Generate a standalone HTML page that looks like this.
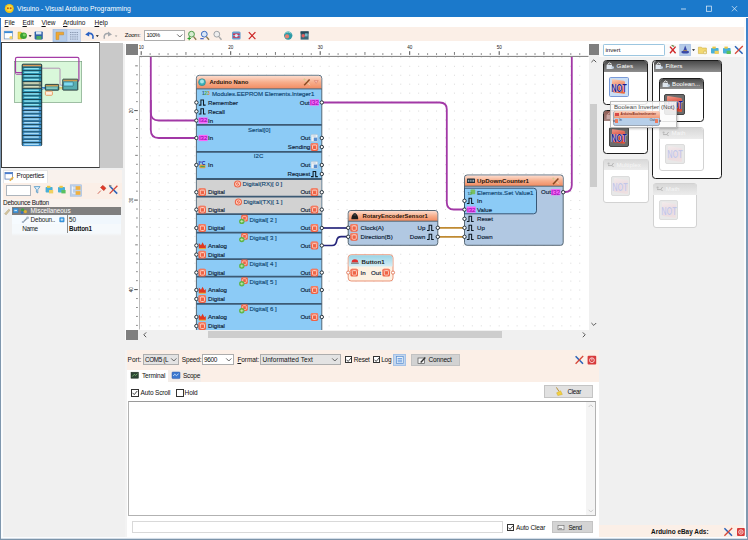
<!DOCTYPE html>
<html><head><meta charset="utf-8"><title>Visuino - Visual Arduino Programming</title>
<style>
html,body{margin:0;padding:0;}
body{width:748px;height:540px;overflow:hidden;background:#f0f0f0;position:relative;font-family:"Liberation Sans",sans-serif;}
div,span.t,svg{position:absolute;box-sizing:border-box;}
span.t{white-space:nowrap;}
u{text-decoration:underline;}
</style></head><body>
<div style="left:0px;top:0px;width:748px;height:17px;background:#1b79cb;"></div>
<svg style="left:4px;top:3px" width="11" height="11" viewBox="0 0 11 11"><circle cx="5.3" cy="5.5" r="4.5" fill="#f2c313"/><circle cx="5.3" cy="5.2" r="3" fill="#f7dc4a"/><circle cx="3.9" cy="5.3" r="1" fill="#c05a10"/><circle cx="6.7" cy="5.3" r="1" fill="#c05a10"/></svg>
<span class="t" style="top:4.53px;font-size:6.78px;line-height:8.14px;color:#fff;left:17px;">Visuino - Visual Arduino Programming</span>
<svg style="left:670px;top:0" width="78" height="18" viewBox="0 0 78 18"><path d="M11 9h5" stroke="#fff" stroke-width="0.7" fill="none"/><rect x="36.4" y="6.1" width="5.2" height="5.2" stroke="#eaf3fb" stroke-width="0.7" fill="none"/><path d="M61.9 6.1l5.2 5.2M67.1 6.1l-5.2 5.2" stroke="#eaf3fb" stroke-width="0.7" fill="none"/></svg>
<div style="left:0px;top:17px;width:748px;height:10.5px;background:#fff;"></div>
<span class="t" style="top:18.90px;font-size:6.5px;line-height:7.8px;color:#111;left:4.5px;"><u>F</u>ile</span>
<span class="t" style="top:18.90px;font-size:6.5px;line-height:7.8px;color:#111;left:22.5px;"><u>E</u>dit</span>
<span class="t" style="top:18.90px;font-size:6.5px;line-height:7.8px;color:#111;left:41.5px;"><u>V</u>iew</span>
<span class="t" style="top:18.90px;font-size:6.5px;line-height:7.8px;color:#111;left:63px;"><u>A</u>rduino</span>
<span class="t" style="top:18.90px;font-size:6.5px;line-height:7.8px;color:#111;left:94.5px;"><u>H</u>elp</span>
<div style="left:0px;top:27.3px;width:748px;height:13.7px;background:#fbefe7;"></div>
<div style="left:0px;top:41px;width:748px;height:2.5px;background:#fff;"></div>
<svg style="left:0;top:27px" width="330" height="16" viewBox="0 0 330 16">
<rect x="4.3" y="4.3" width="8.2" height="7.6" fill="#fff" stroke="#7aa0c8" stroke-width="0.8"/><rect x="4.3" y="4.3" width="8.2" height="1.8" fill="#3a8ad8"/><circle cx="11" cy="10.5" r="1.6" fill="#f2d060"/>
<path d="M18 5h3l1 1v6h-4z" fill="#f0d040" stroke="#c8a020" stroke-width="0.5"/><ellipse cx="23.5" cy="8.8" rx="3.4" ry="3.2" fill="#3aa030"/><ellipse cx="24.3" cy="8" rx="1.6" ry="1.4" fill="#7ad060"/>
<path d="M28.6 8.2h3l-1.5 1.8z" fill="#111"/>
<rect x="34.6" y="4.4" width="8.2" height="8" rx="0.8" fill="#3060a8"/><rect x="36" y="4.4" width="5.4" height="3" fill="#d8e4f4"/><rect x="36.4" y="9" width="5" height="3.4" fill="#4aa860"/>
<rect x="53" y="2.6" width="13.4" height="12.2" fill="#b4cbe8" stroke="#8fb0dc" stroke-width="0.6"/><path d="M56 12.6v-7.4h7.6v2.6h-4.8v4.8z" fill="#f0a830" stroke="#c88420" stroke-width="0.5"/>
<rect x="67" y="2.6" width="13.4" height="12.2" fill="#cddbf0" stroke="#a8c0e4" stroke-width="0.6"/><path d="M70 5.5h8M70 7.7h8M70 9.9h8M70 12.1h8" stroke="#8090a8" stroke-width="0.9" stroke-dasharray="1.4 0.8"/>
<path d="M92.8 11.8c1.2-3.6-1.2-6-4.4-5.2" stroke="#2a62c4" stroke-width="1.7" fill="none"/><path d="M85.2 7.4l4-3v5.2z" fill="#2a62c4"/>
<path d="M95.8 8.2h3l-1.5 1.8z" fill="#111"/>
<path d="M104.4 11.8c-1.2-3.6 1.2-6 4.4-5.2" stroke="#a4a8ac" stroke-width="1.5" fill="none"/><path d="M112 7.4l-4-3v5.2z" fill="#a4a8ac"/>
<path d="M114.8 8.4h2.6l-1.3 1.6z" fill="#999"/>
<g><circle cx="191.5" cy="7.2" r="2.9" fill="#d6ecd0" stroke="#4c9a48" stroke-width="1"/><path d="M193.6 9.6l2.6 3.2" stroke="#8a7a50" stroke-width="1.4"/><path d="M187.5 11.5h3.4M189.2 9.8v3.4" stroke="#2aa02a" stroke-width="1.1"/></g>
<g><circle cx="204.3" cy="7.2" r="2.9" fill="#d8e6f8" stroke="#3c6cc0" stroke-width="1"/><path d="M206.4 9.6l2.6 3.2" stroke="#8a7a50" stroke-width="1.4"/><path d="M200.3 11.7h3.4" stroke="#2a50c0" stroke-width="1.1"/></g>
<g><circle cx="216.8" cy="7.2" r="2.9" fill="#eee" stroke="#a0a4a8" stroke-width="1"/><path d="M218.9 9.6l2.6 3.2" stroke="#a8a8a8" stroke-width="1.4"/></g>
<g><rect x="232" y="4.6" width="8.6" height="7.8" rx="1.5" fill="#6aa0d0"/><path d="M233 7.2h6.6M233 10h6.6" stroke="#d03050" stroke-width="1.5"/><circle cx="236.3" cy="8.6" r="1.6" fill="#e8e8f0"/></g>
<path d="M248.8 5.2l6.6 7M255.4 5.2l-6.6 7" stroke="#cc2424" stroke-width="1.2" fill="none"/>
<circle cx="288.2" cy="8.6" r="4.2" fill="#2e9aa6"/><circle cx="287" cy="9.4" r="2.1" fill="#e88070"/><path d="M285 6.2c2-1.6 5-1.4 6.4 0.6" stroke="#8fd8d8" stroke-width="1" fill="none"/>
<rect x="300.6" y="4.4" width="8" height="8.2" fill="#3a6878"/><rect x="300.6" y="4.4" width="8" height="2.2" fill="#284858"/><circle cx="303.2" cy="8.8" r="1.7" fill="#e86060"/><rect x="305" y="6.4" width="2.6" height="3" fill="#7ab8c8"/>
</svg>
<span class="t" style="top:31.67px;font-size:6.05px;line-height:7.26px;color:#111;left:124.8px;letter-spacing:-0.309px;">Zoom:</span>
<div style="left:144px;top:29.8px;width:41.2px;height:11.6px;background:#fff;border:1px solid #adadad;"></div>
<span class="t" style="top:32.09px;font-size:5.85px;line-height:7.02px;color:#111;left:146.4px;letter-spacing:-0.341px;">100%</span>
<svg style="left:176px;top:33px" width="8" height="6" viewBox="0 0 8 6"><path d="M1.2 1.4l2.6 2.6 2.6-2.6" stroke="#444" stroke-width="0.8" fill="none"/></svg>
<div style="left:0px;top:17.5px;width:1px;height:522.5px;background:linear-gradient(#2f78c8,#6a92bc 12%,#7f97ae 30%);"></div>
<div style="left:1px;top:43px;width:2px;height:495px;background:#fafcfe;"></div>
<div style="left:746.2px;top:17.5px;width:1.8px;height:522.5px;background:linear-gradient(#3a80cc,#6a96c4 20%,#8199b0 50%);"></div>
<div style="left:744.2px;top:17.5px;width:2px;height:521px;background:#fafcfe;"></div>
<div style="left:0px;top:539px;width:748px;height:1px;background:#7c94aa;"></div>
<div style="left:1px;top:538px;width:746px;height:1px;background:#d3dce6;"></div>
<div style="left:1px;top:536.6px;width:745.5px;height:1.4px;background:#fbfdff;"></div>
<div style="left:100.4px;top:42.6px;width:22.6px;height:125px;background:#c9c9c9;"></div>
<div style="left:1.4px;top:42px;width:98.4px;height:125.8px;background:#fff;border:1px solid #3a3a3a;border-right-color:#888;"></div>
<svg style="left:0;top:42px" width="125" height="126" viewBox="0 42 125 126"><rect x="14.4" y="61.4" width="67.3" height="41.2" fill="#d9f8da" stroke="#6e9676" stroke-width="0.6"/><path d="M22 72.7h-5q-1.5 0-1.5-1.5v-12.4q0-1.5 1.5-1.5h60.4q1.5 0 1.5 1.5v21q0 1.5-1.2 1.5" fill="none" stroke="#a43ca6" stroke-width="1.2"/><path d="M22 74.4h-5.4q-1.1 0-1.1-1.1v-9" fill="none" stroke="#a43ca6" stroke-width="0.8"/><path d="M41.8 68.2h17.2q1 0 1 1v15q0 1 1 1h1.9" fill="none" stroke="#a878aa" stroke-width="0.8"/><path d="M41.8 87.6h3.6M41.8 89.2q1.6 0 1.8-0.5t1.8-0.5" fill="none" stroke="#2c78d0" stroke-width="1"/><path d="M58.7 87.6h4.2M58.7 88.8h4.2" fill="none" stroke="#e0c060" stroke-width="0.9"/><rect x="22.2" y="64.2" width="19.5" height="81.4" rx="0.8" fill="#2f93b4" stroke="#182a30" stroke-width="1"/><rect x="22.8" y="64.8" width="18.3" height="1.6" fill="#d89a58"/><rect x="22.8" y="66.80" width="18.3" height="1" fill="#12262e"/><rect x="22.8" y="67.50" width="18.3" height="2.9" fill="#2a90ae"/><rect x="24.2" y="68.00" width="14.6" height="1.4" fill="#8fe2f0"/><rect x="22.8" y="70.40" width="18.3" height="1" fill="#12262e"/><rect x="22.8" y="71.10" width="18.3" height="2.9" fill="#2a90ae"/><rect x="24.2" y="71.60" width="14.6" height="1.4" fill="#8fe2f0"/><rect x="22.8" y="74.00" width="18.3" height="1" fill="#12262e"/><rect x="22.8" y="74.70" width="18.3" height="2.9" fill="#2a90ae"/><rect x="24.2" y="75.20" width="14.6" height="1.4" fill="#8fe2f0"/><rect x="22.8" y="77.60" width="18.3" height="1" fill="#12262e"/><rect x="22.8" y="78.30" width="18.3" height="2.9" fill="#2a90ae"/><rect x="24.2" y="78.80" width="14.6" height="1.4" fill="#8fe2f0"/><rect x="22.8" y="81.20" width="18.3" height="1" fill="#12262e"/><rect x="22.8" y="81.90" width="18.3" height="2.9" fill="#8a947c"/><rect x="24.2" y="82.40" width="14.6" height="1.4" fill="#d4dcc0"/><rect x="22.8" y="84.80" width="18.3" height="1" fill="#12262e"/><rect x="22.8" y="85.50" width="18.3" height="2.9" fill="#8a947c"/><rect x="24.2" y="86.00" width="14.6" height="1.4" fill="#d4dcc0"/><rect x="22.8" y="88.40" width="18.3" height="1" fill="#12262e"/><rect x="22.8" y="89.10" width="18.3" height="2.9" fill="#2a90ae"/><rect x="24.2" y="89.60" width="14.6" height="1.4" fill="#8fe2f0"/><rect x="22.8" y="92.00" width="18.3" height="1" fill="#12262e"/><rect x="22.8" y="92.70" width="18.3" height="2.9" fill="#2a90ae"/><rect x="24.2" y="93.20" width="14.6" height="1.4" fill="#8fe2f0"/><rect x="22.8" y="95.60" width="18.3" height="1" fill="#12262e"/><rect x="22.8" y="96.30" width="18.3" height="2.9" fill="#2a90ae"/><rect x="24.2" y="96.80" width="14.6" height="1.4" fill="#8fe2f0"/><rect x="22.8" y="99.20" width="18.3" height="1" fill="#12262e"/><rect x="22.8" y="99.90" width="18.3" height="2.9" fill="#2a90ae"/><rect x="24.2" y="100.40" width="14.6" height="1.4" fill="#8fe2f0"/><rect x="22.8" y="102.80" width="18.3" height="1" fill="#12262e"/><rect x="22.8" y="103.50" width="18.3" height="2.9" fill="#2a90ae"/><rect x="24.2" y="104.00" width="14.6" height="1.4" fill="#8fe2f0"/><rect x="22.8" y="106.40" width="18.3" height="1" fill="#12262e"/><rect x="22.8" y="107.10" width="18.3" height="2.9" fill="#3f8ec8"/><rect x="24.2" y="107.60" width="14.6" height="1.4" fill="#a8dcf6"/><rect x="22.8" y="110.00" width="18.3" height="1" fill="#12262e"/><rect x="22.8" y="110.70" width="18.3" height="2.9" fill="#3f8ec8"/><rect x="24.2" y="111.20" width="14.6" height="1.4" fill="#a8dcf6"/><rect x="22.8" y="113.60" width="18.3" height="1" fill="#12262e"/><rect x="22.8" y="114.30" width="18.3" height="2.9" fill="#3f8ec8"/><rect x="24.2" y="114.80" width="14.6" height="1.4" fill="#a8dcf6"/><rect x="22.8" y="117.20" width="18.3" height="1" fill="#12262e"/><rect x="22.8" y="117.90" width="18.3" height="2.9" fill="#3f8ec8"/><rect x="24.2" y="118.40" width="14.6" height="1.4" fill="#a8dcf6"/><rect x="22.8" y="120.80" width="18.3" height="1" fill="#12262e"/><rect x="22.8" y="121.50" width="18.3" height="2.9" fill="#3f8ec8"/><rect x="24.2" y="122.00" width="14.6" height="1.4" fill="#a8dcf6"/><rect x="22.8" y="124.40" width="18.3" height="1" fill="#12262e"/><rect x="22.8" y="125.10" width="18.3" height="2.9" fill="#3f8ec8"/><rect x="24.2" y="125.60" width="14.6" height="1.4" fill="#a8dcf6"/><rect x="22.8" y="128.00" width="18.3" height="1" fill="#12262e"/><rect x="22.8" y="128.70" width="18.3" height="2.9" fill="#3f8ec8"/><rect x="24.2" y="129.20" width="14.6" height="1.4" fill="#a8dcf6"/><rect x="22.8" y="131.60" width="18.3" height="1" fill="#12262e"/><rect x="22.8" y="132.30" width="18.3" height="2.9" fill="#3f8ec8"/><rect x="24.2" y="132.80" width="14.6" height="1.4" fill="#a8dcf6"/><rect x="22.8" y="135.20" width="18.3" height="1" fill="#12262e"/><rect x="22.8" y="135.90" width="18.3" height="2.9" fill="#3f8ec8"/><rect x="24.2" y="136.40" width="14.6" height="1.4" fill="#a8dcf6"/><rect x="22.8" y="138.80" width="18.3" height="1" fill="#12262e"/><rect x="22.8" y="139.50" width="18.3" height="2.9" fill="#3f8ec8"/><rect x="24.2" y="140.00" width="14.6" height="1.4" fill="#a8dcf6"/><rect x="22.8" y="142.40" width="18.3" height="1" fill="#12262e"/><rect x="22.8" y="143.10" width="18.3" height="2.9" fill="#3f8ec8"/><rect x="24.2" y="143.60" width="14.6" height="1.4" fill="#a8dcf6"/><rect x="45.3" y="84.4" width="13.4" height="5.8" rx="0.5" fill="#55a8a8" stroke="#1a2a2e" stroke-width="0.9"/><rect x="45.8" y="84.9" width="12.4" height="1.5" fill="#c89a50"/><rect x="46.6" y="87.4" width="10.6" height="1.6" fill="#84c8c0"/><rect x="45.4" y="91.2" width="7" height="4.1" rx="0.9" fill="#fdeedd" stroke="#e88a48" stroke-width="0.8"/><rect x="62.8" y="79.2" width="15" height="10.9" rx="0.5" fill="#58aeb0" stroke="#1a2a2e" stroke-width="0.9"/><rect x="63.3" y="79.7" width="14" height="1.6" fill="#c89a50"/><rect x="63.6" y="82" width="9.6" height="4" rx="0.5" fill="#7fdcf0" stroke="#1c4c60" stroke-width="0.5"/></svg>
<div style="left:2.6px;top:169.6px;width:119.4px;height:13px;background:#f9f2ed;"></div>
<div style="left:2.6px;top:169.8px;width:45.6px;height:13px;background:#fff;border:1px solid #e6e6e6;border-bottom:none;"></div>
<svg style="left:4px;top:171px" width="11" height="11" viewBox="0 0 11 11"><rect x="1" y="1.5" width="7.6" height="6.6" fill="#fff" stroke="#5a7eb8" stroke-width="0.8"/><rect x="1" y="1.5" width="7.6" height="1.6" fill="#4a7ed0"/><path d="M5.2 9.2l3.4-3.6 1.2 1.2-3.4 3.4z" fill="#e8b040"/></svg>
<span class="t" style="top:172.46px;font-size:6.4px;line-height:7.68px;color:#111;left:16.6px;letter-spacing:-0.167px;">Properties</span>
<div style="left:2.6px;top:182.6px;width:119.4px;height:16.6px;background:#fbefe7;"></div>
<div style="left:2.6px;top:199.2px;width:119.4px;height:8px;background:#f8f2ee;"></div>
<div style="left:6px;top:185.2px;width:25.4px;height:11px;background:#fff;border:1px solid #adb5bd;"></div>
<svg style="left:32px;top:183px" width="90" height="15" viewBox="32 183 90 15">
<path d="M34.2 186.6h5.8l-2.2 3v3.4l-1.4-0.8v-2.6z" fill="#e0f0fa" stroke="#3a8ac0" stroke-width="0.7"/>
<rect x="45.6" y="187" width="7" height="5.6" rx="0.8" fill="#48b0d8"/><rect x="47" y="185.8" width="3.4" height="2" fill="#f0c840"/><rect x="49" y="190" width="4.2" height="3.4" fill="#f0d060"/>
<rect x="58" y="187" width="7" height="5.6" rx="0.8" fill="#48b0d8"/><rect x="59.4" y="185.8" width="3.4" height="2" fill="#f0c840"/><rect x="61.4" y="190" width="4.2" height="3.4" fill="#5ac060"/>
<rect x="70.2" y="184.8" width="11.4" height="11.4" fill="#bcd0ea" stroke="#9ab8e0" stroke-width="0.5"/><rect x="75.6" y="186.2" width="4.8" height="3.6" fill="#f0b040"/><rect x="75.6" y="191.2" width="4.8" height="3.6" fill="#f0b040"/><path d="M72.4 186.4v6.8h3M72.4 188h3" stroke="#fff" stroke-width="0.8" fill="none"/>
<path d="M100.6 187.4l2.4-2 2.8 2.8-2 2.4zM100.8 190.6l-3 3.2" fill="#e03828" stroke="#c03020" stroke-width="0.7"/>
<path d="M109.6 186l7.6 7.6" stroke="#2a62b8" stroke-width="1.5"/><path d="M117.4 185.8l-7.8 7.8" stroke="#d84838" stroke-width="1.3"/><path d="M109 185.4l2.4 0.6" stroke="#888" stroke-width="1.4"/>
</svg>
<span class="t" style="top:198.96px;font-size:6.4px;line-height:7.68px;color:#111;left:3px;letter-spacing:-0.231px;">Debounce Button</span>
<div style="left:12.4px;top:207px;width:108.8px;height:8.2px;background:#7f7f7f;"></div>
<svg style="left:3px;top:206px" width="30" height="11" viewBox="3 206 30 11">
<path d="M4.6 213.8l4.2-4.6 1.2 1-3.8 4.6z" fill="#d8c8a0" stroke="#9a8a60" stroke-width="0.4"/>
<rect x="13.4" y="208.2" width="4.6" height="4.6" fill="#4aa0e0" stroke="#2a78c0" stroke-width="0.5"/><path d="M14.4 210.5h2.6" stroke="#fff" stroke-width="0.7"/>
<circle cx="22.6" cy="209.8" r="1.6" fill="#40a040"/><circle cx="25.4" cy="211.6" r="1.6" fill="#e0b030"/><circle cx="22" cy="212.6" r="1.3" fill="#3070c0"/>
</svg>
<span class="t" style="top:207.36px;font-size:6.4px;line-height:7.68px;color:#fff;left:30.6px;letter-spacing:-0.043px;">Miscellaneous</span>
<div style="left:12.4px;top:215px;width:108.8px;height:18.4px;background:#f5f9fc;"></div>
<div style="left:12.4px;top:233.4px;width:108.8px;height:3px;background:linear-gradient(#f5f9fc,#f0f0f0);"></div>
<div style="left:12.4px;top:215px;width:54.8px;height:9px;background:#f6fbff;"></div>
<div style="left:67.6px;top:215px;width:53.6px;height:9px;background:#f0f7fd;"></div>
<div style="left:67.2px;top:215px;width:0.7px;height:18.4px;background:#8a8a8a;"></div>
<svg style="left:20px;top:215px" width="46" height="10" viewBox="20 215 46 10">
<path d="M22.6 222.6l4.4-4.4" stroke="#8898a8" stroke-width="1.3"/><circle cx="27.6" cy="217.8" r="1.4" fill="#a8b8c8"/><circle cx="22.8" cy="222" r="1.1" fill="#a8b8c8"/>
<rect x="59.6" y="217.4" width="4.6" height="4.6" rx="0.6" fill="#3c9ae0" stroke="#2a78c0" stroke-width="0.4"/><path d="M60.6 219.7h2.6M61.9 218.4v2.6" stroke="#fff" stroke-width="0.7"/>
</svg>
<span class="t" style="top:215.96px;font-size:6.4px;line-height:7.68px;color:#222;left:30.6px;letter-spacing:-0.184px;">Deboun..</span>
<span class="t" style="top:216.02px;font-size:6.3px;line-height:7.56px;color:#222;left:69px;">50</span>
<span class="t" style="top:225.16px;font-size:6.4px;line-height:7.68px;color:#222;left:22.2px;letter-spacing:-0.368px;">Name</span>
<span class="t" style="top:225.22px;font-size:6.3px;line-height:7.56px;color:#111;font-weight:bold;left:69px;letter-spacing:-0.114px;">Button1</span>
<div style="left:124.6px;top:43.5px;width:475px;height:296.8px;background:#fff;"></div>
<div style="left:125.7px;top:44px;width:12.2px;height:10.5px;background:#7f7f7f;"></div>
<div style="left:588.6px;top:44px;width:10px;height:10.5px;background:#7f7f7f;"></div>
<div style="left:125.7px;top:329.6px;width:12.2px;height:10.5px;background:#7f7f7f;"></div>
<svg style="left:124px;top:43px" width="476" height="298" viewBox="124 43 476 298"><path d="M139.6 56.4H588.5" stroke="#7a7a7a" stroke-width="1"/><path d="M140 56V329.5" stroke="#7a7a7a" stroke-width="1"/><path d="M141.20 51.2V54.9" stroke="#222" stroke-width="0.8"/><text x="138.80" y="49.2" font-size="4.6" fill="#222" font-family="Liberation Sans, sans-serif">10</text><path d="M150.15 53.2V54.9" stroke="#666" stroke-width="0.8"/><path d="M159.10 53.2V54.9" stroke="#666" stroke-width="0.8"/><path d="M168.05 53.2V54.9" stroke="#666" stroke-width="0.8"/><path d="M177.00 53.2V54.9" stroke="#666" stroke-width="0.8"/><path d="M185.95 52V54.9" stroke="#444" stroke-width="0.7"/><path d="M194.90 53.2V54.9" stroke="#666" stroke-width="0.8"/><path d="M203.85 53.2V54.9" stroke="#666" stroke-width="0.8"/><path d="M212.80 53.2V54.9" stroke="#666" stroke-width="0.8"/><path d="M221.75 53.2V54.9" stroke="#666" stroke-width="0.8"/><path d="M230.70 51.2V54.9" stroke="#222" stroke-width="0.8"/><text x="228.30" y="49.2" font-size="4.6" fill="#222" font-family="Liberation Sans, sans-serif">20</text><path d="M239.65 53.2V54.9" stroke="#666" stroke-width="0.8"/><path d="M248.60 53.2V54.9" stroke="#666" stroke-width="0.8"/><path d="M257.55 53.2V54.9" stroke="#666" stroke-width="0.8"/><path d="M266.50 53.2V54.9" stroke="#666" stroke-width="0.8"/><path d="M275.45 52V54.9" stroke="#444" stroke-width="0.7"/><path d="M284.40 53.2V54.9" stroke="#666" stroke-width="0.8"/><path d="M293.35 53.2V54.9" stroke="#666" stroke-width="0.8"/><path d="M302.30 53.2V54.9" stroke="#666" stroke-width="0.8"/><path d="M311.25 53.2V54.9" stroke="#666" stroke-width="0.8"/><path d="M320.20 51.2V54.9" stroke="#222" stroke-width="0.8"/><text x="317.80" y="49.2" font-size="4.6" fill="#222" font-family="Liberation Sans, sans-serif">30</text><path d="M329.15 53.2V54.9" stroke="#666" stroke-width="0.8"/><path d="M338.10 53.2V54.9" stroke="#666" stroke-width="0.8"/><path d="M347.05 53.2V54.9" stroke="#666" stroke-width="0.8"/><path d="M356.00 53.2V54.9" stroke="#666" stroke-width="0.8"/><path d="M364.95 52V54.9" stroke="#444" stroke-width="0.7"/><path d="M373.90 53.2V54.9" stroke="#666" stroke-width="0.8"/><path d="M382.85 53.2V54.9" stroke="#666" stroke-width="0.8"/><path d="M391.80 53.2V54.9" stroke="#666" stroke-width="0.8"/><path d="M400.75 53.2V54.9" stroke="#666" stroke-width="0.8"/><path d="M409.70 51.2V54.9" stroke="#222" stroke-width="0.8"/><text x="407.30" y="49.2" font-size="4.6" fill="#222" font-family="Liberation Sans, sans-serif">40</text><path d="M418.65 53.2V54.9" stroke="#666" stroke-width="0.8"/><path d="M427.60 53.2V54.9" stroke="#666" stroke-width="0.8"/><path d="M436.55 53.2V54.9" stroke="#666" stroke-width="0.8"/><path d="M445.50 53.2V54.9" stroke="#666" stroke-width="0.8"/><path d="M454.45 52V54.9" stroke="#444" stroke-width="0.7"/><path d="M463.40 53.2V54.9" stroke="#666" stroke-width="0.8"/><path d="M472.35 53.2V54.9" stroke="#666" stroke-width="0.8"/><path d="M481.30 53.2V54.9" stroke="#666" stroke-width="0.8"/><path d="M490.25 53.2V54.9" stroke="#666" stroke-width="0.8"/><path d="M499.20 51.2V54.9" stroke="#222" stroke-width="0.8"/><text x="496.80" y="49.2" font-size="4.6" fill="#222" font-family="Liberation Sans, sans-serif">50</text><path d="M508.15 53.2V54.9" stroke="#666" stroke-width="0.8"/><path d="M517.10 53.2V54.9" stroke="#666" stroke-width="0.8"/><path d="M526.05 53.2V54.9" stroke="#666" stroke-width="0.8"/><path d="M535.00 53.2V54.9" stroke="#666" stroke-width="0.8"/><path d="M543.95 52V54.9" stroke="#444" stroke-width="0.7"/><path d="M552.90 53.2V54.9" stroke="#666" stroke-width="0.8"/><path d="M561.85 53.2V54.9" stroke="#666" stroke-width="0.8"/><path d="M570.80 53.2V54.9" stroke="#666" stroke-width="0.8"/><path d="M579.75 53.2V54.9" stroke="#666" stroke-width="0.8"/><path d="M135.2 65.85H137.8" stroke="#444" stroke-width="0.7"/><path d="M136.1 74.80H137.8" stroke="#666" stroke-width="0.8"/><path d="M136.1 83.75H137.8" stroke="#666" stroke-width="0.8"/><path d="M136.1 92.70H137.8" stroke="#666" stroke-width="0.8"/><path d="M136.1 101.65H137.8" stroke="#666" stroke-width="0.8"/><path d="M134.2 110.60H137.8" stroke="#222" stroke-width="0.8"/><text transform="translate(132.6 113.20) rotate(-90)" font-size="4.6" fill="#222" font-family="Liberation Sans, sans-serif">20</text><path d="M136.1 119.55H137.8" stroke="#666" stroke-width="0.8"/><path d="M136.1 128.50H137.8" stroke="#666" stroke-width="0.8"/><path d="M136.1 137.45H137.8" stroke="#666" stroke-width="0.8"/><path d="M136.1 146.40H137.8" stroke="#666" stroke-width="0.8"/><path d="M135.2 155.35H137.8" stroke="#444" stroke-width="0.7"/><path d="M136.1 164.30H137.8" stroke="#666" stroke-width="0.8"/><path d="M136.1 173.25H137.8" stroke="#666" stroke-width="0.8"/><path d="M136.1 182.20H137.8" stroke="#666" stroke-width="0.8"/><path d="M136.1 191.15H137.8" stroke="#666" stroke-width="0.8"/><path d="M134.2 200.10H137.8" stroke="#222" stroke-width="0.8"/><text transform="translate(132.6 202.70) rotate(-90)" font-size="4.6" fill="#222" font-family="Liberation Sans, sans-serif">30</text><path d="M136.1 209.05H137.8" stroke="#666" stroke-width="0.8"/><path d="M136.1 218.00H137.8" stroke="#666" stroke-width="0.8"/><path d="M136.1 226.95H137.8" stroke="#666" stroke-width="0.8"/><path d="M136.1 235.90H137.8" stroke="#666" stroke-width="0.8"/><path d="M135.2 244.85H137.8" stroke="#444" stroke-width="0.7"/><path d="M136.1 253.80H137.8" stroke="#666" stroke-width="0.8"/><path d="M136.1 262.75H137.8" stroke="#666" stroke-width="0.8"/><path d="M136.1 271.70H137.8" stroke="#666" stroke-width="0.8"/><path d="M136.1 280.65H137.8" stroke="#666" stroke-width="0.8"/><path d="M134.2 289.60H137.8" stroke="#222" stroke-width="0.8"/><text transform="translate(132.6 292.20) rotate(-90)" font-size="4.6" fill="#222" font-family="Liberation Sans, sans-serif">40</text><path d="M136.1 298.55H137.8" stroke="#666" stroke-width="0.8"/><path d="M136.1 307.50H137.8" stroke="#666" stroke-width="0.8"/><path d="M136.1 316.45H137.8" stroke="#666" stroke-width="0.8"/><path d="M136.1 325.40H137.8" stroke="#666" stroke-width="0.8"/></svg>
<div style="left:140.2px;top:57px;width:448.3px;height:272.5px;overflow:hidden;background:#fff;"><div style="left:-140.2px;top:-57px;width:748px;height:540px;">
<svg style="left:0;top:0" width="748" height="540" viewBox="0 0 748 540"><defs><pattern id="gd" x="140.7" y="65.8" width="8.95" height="8.95" patternUnits="userSpaceOnUse"><rect x="0" y="0" width="1" height="1" fill="#d9d9d9"/></pattern><linearGradient id="hd" x1="0" y1="0" x2="0" y2="1"><stop offset="0" stop-color="#fcddcf"/><stop offset="0.5" stop-color="#f7ae8c"/><stop offset="1" stop-color="#f18c62"/></linearGradient><linearGradient id="hb" x1="0" y1="0" x2="0" y2="1"><stop offset="0" stop-color="#9ad4e6"/><stop offset="1" stop-color="#d6eef6"/></linearGradient></defs><rect x="140.2" y="57" width="448.3" height="272.5" fill="url(#gd)"/><path d="M150.8 50V112.5q0 8 8 8H196" fill="none" stroke="#a238a6" stroke-width="1.8"/><path d="M150.8 100V130q0 8 8 8H196" fill="none" stroke="#a238a6" stroke-width="1.8"/><path d="M322 102.5H439.8q7 0 7 7V202.5q0 7 7 7H464" fill="none" stroke="#a238a6" stroke-width="1.8"/><path d="M563.4 192H565q6.8 0 6.8-7V50" fill="none" stroke="#a238a6" stroke-width="1.8"/><path d="M322 228H349" fill="none" stroke="#27277c" stroke-width="1.7"/><path d="M322 245.5H332q4 0 4.6-4.4t4.6-4.4H349" fill="none" stroke="#27277c" stroke-width="1.7"/><path d="M438 227.8H464.4M438 236.8H464.4" fill="none" stroke="#c08a32" stroke-width="1.8"/><path d="M196.4 340V78.3q0-3 3-3H318.8q3 0 3 3V340z" fill="#8ccbf6" stroke="#4a5a66" stroke-width="0.9"/><path d="M196.85 88.7V78.3q0-2.6 2.6-2.6H318.75q2.6 0 2.6 2.6V88.7z" fill="url(#hd)"/><path d="M196.4 88.9H321.8" stroke="#4a5a66" stroke-width="0.9"/><rect x="196.85" y="179" width="124.5" height="35" fill="#d2d2d2"/><path d="M196.4 124.8H321.8" stroke="#3c5a74" stroke-width="1.8"/><path d="M196.4 151.8H321.8" stroke="#3c5a74" stroke-width="1.8"/><path d="M196.4 179H321.8" stroke="#3c5a74" stroke-width="1.8"/><path d="M196.4 196.6H321.8" stroke="#3c5a74" stroke-width="1.8"/><path d="M196.4 214.2H321.8" stroke="#3c5a74" stroke-width="1.8"/><path d="M196.4 232.6H321.8" stroke="#3c5a74" stroke-width="1.8"/><path d="M196.4 259.2H321.8" stroke="#3c5a74" stroke-width="1.8"/><path d="M196.4 276.6H321.8" stroke="#3c5a74" stroke-width="1.8"/><path d="M196.4 303.8H321.8" stroke="#3c5a74" stroke-width="1.8"/><path d="M196.4 331H321.8" stroke="#3c5a74" stroke-width="1.8"/><circle cx="202" cy="82.2" r="3.5" fill="#3cb0b8" stroke="#2a7a84" stroke-width="0.5"/><circle cx="202" cy="81.6" r="2" fill="#a8e4e8"/><g transform="translate(307.2 82)"><path d="M-3.2 -3l6 6.2" stroke="#e6d8a8" stroke-width="1"/><path d="M-3 3.2l5.4-5.8" stroke="#8a4a22" stroke-width="1.5"/><path d="M-3.4 -3.2l1.6 1.6" stroke="#d8c890" stroke-width="1.6"/></g><path d="M314.2 80.6h4l-2 2.8z" fill="#f8c0b0" stroke="#d07060" stroke-width="0.5"/><g transform="translate(196.4 102.5)"><circle r="1.7" fill="#fff" stroke="#1e2a34" stroke-width="0.95"/></g><g transform="translate(202.20000000000002 102.5)"><path d="M-3.4 2.6h2.1v-5.2h2.6v5.2h2.1" fill="none" stroke="#0e1a24" stroke-width="1.05"/></g><g transform="translate(196.4 111.4)"><circle r="1.7" fill="#fff" stroke="#1e2a34" stroke-width="0.95"/></g><g transform="translate(202.20000000000002 111.4)"><path d="M-3.4 2.6h2.1v-5.2h2.6v5.2h2.1" fill="none" stroke="#0e1a24" stroke-width="1.05"/></g><g transform="translate(196.4 120.5)"><circle r="1.7" fill="#fff" stroke="#1e2a34" stroke-width="0.95"/></g><rect x="198.6" y="117.40" width="9" height="6.2" fill="#fa66fa"/><g transform="translate(321.8 102.5)"><circle r="1.7" fill="#fff" stroke="#1e2a34" stroke-width="0.95"/></g><rect x="309.6" y="99.40" width="9.4" height="6.2" fill="#fa66fa"/><g transform="translate(196.4 138)"><circle r="1.7" fill="#fff" stroke="#1e2a34" stroke-width="0.95"/></g><rect x="198.6" y="134.90" width="9" height="6.2" fill="#fa66fa"/><g transform="translate(321.8 138)"><circle r="1.7" fill="#fff" stroke="#1e2a34" stroke-width="0.95"/></g><g transform="translate(314.40000000000003 138)"><rect x="-3.3" y="-3.6" width="6.6" height="7.2" rx="0.8" fill="#edf2f6" stroke="#a8bccc" stroke-width="0.5"/><rect x="-0.6" y="-0.4" width="3.4" height="3.4" fill="#5a8ed0"/><path d="M-2 -2h3.4" stroke="#9ab0c8" stroke-width="0.6"/></g><g transform="translate(321.8 147)"><circle r="1.7" fill="#fff" stroke="#1e2a34" stroke-width="0.95"/></g><g transform="translate(314.40000000000003 147)"><rect x="-3.8" y="-3.9" width="7.6" height="7.8" rx="1.6" fill="#ef6446"/><rect x="-3.8" y="-3.9" width="7.6" height="3" rx="1.6" fill="#f58c74" opacity="0.6"/><rect x="-1.9" y="-2.1" width="4.2" height="4.6" rx="1.1" fill="none" stroke="#fcd4c6" stroke-width="0.9"/></g><g transform="translate(196.4 165)"><circle r="1.7" fill="#fff" stroke="#1e2a34" stroke-width="0.95"/></g><rect x="199.4" y="164.6" width="6" height="3.6" rx="0.6" fill="#e8a040"/><rect x="200.4" y="165.8" width="4.4" height="1.4" fill="#50a050"/><g transform="translate(321.8 165)"><circle r="1.7" fill="#fff" stroke="#1e2a34" stroke-width="0.95"/></g><g transform="translate(314.40000000000003 165)"><rect x="-3.3" y="-3.6" width="6.6" height="7.2" rx="0.8" fill="#edf2f6" stroke="#a8bccc" stroke-width="0.5"/><rect x="-0.6" y="-0.4" width="3.4" height="3.4" fill="#5a8ed0"/><path d="M-2 -2h3.4" stroke="#9ab0c8" stroke-width="0.6"/></g><g transform="translate(321.8 174)"><circle r="1.7" fill="#fff" stroke="#1e2a34" stroke-width="0.95"/></g><g transform="translate(314.40000000000003 174)"><path d="M-3.4 2.6h2.1v-5.2h2.6v5.2h2.1" fill="none" stroke="#0e1a24" stroke-width="1.05"/></g><g transform="translate(237.6 184)"><circle r="3.6" fill="#ef6446"/><circle r="2.1" fill="none" stroke="#fcdcd0" stroke-width="0.9"/><path d="M-1.5 1.5l3-3" stroke="#fcdcd0" stroke-width="0.9"/></g><g transform="translate(196.4 192.2)"><circle r="1.7" fill="#fff" stroke="#1e2a34" stroke-width="0.95"/></g><g transform="translate(202.20000000000002 192.2)"><rect x="-3.8" y="-3.9" width="7.6" height="7.8" rx="1.6" fill="#ef6446"/><rect x="-3.8" y="-3.9" width="7.6" height="3" rx="1.6" fill="#f58c74" opacity="0.6"/><rect x="-1.9" y="-2.1" width="4.2" height="4.6" rx="1.1" fill="none" stroke="#fcd4c6" stroke-width="0.9"/></g><g transform="translate(321.8 192.2)"><circle r="1.7" fill="#fff" stroke="#1e2a34" stroke-width="0.95"/></g><g transform="translate(314.40000000000003 192.2)"><rect x="-3.8" y="-3.9" width="7.6" height="7.8" rx="1.6" fill="#ef6446"/><rect x="-3.8" y="-3.9" width="7.6" height="3" rx="1.6" fill="#f58c74" opacity="0.6"/><rect x="-1.9" y="-2.1" width="4.2" height="4.6" rx="1.1" fill="none" stroke="#fcd4c6" stroke-width="0.9"/></g><g transform="translate(238.4 202)"><circle r="3.6" fill="#ef6446"/><circle r="2.1" fill="none" stroke="#fcdcd0" stroke-width="0.9"/><path d="M-1.5 1.5l3-3" stroke="#fcdcd0" stroke-width="0.9"/></g><g transform="translate(196.4 209.6)"><circle r="1.7" fill="#fff" stroke="#1e2a34" stroke-width="0.95"/></g><g transform="translate(202.20000000000002 209.6)"><rect x="-3.8" y="-3.9" width="7.6" height="7.8" rx="1.6" fill="#ef6446"/><rect x="-3.8" y="-3.9" width="7.6" height="3" rx="1.6" fill="#f58c74" opacity="0.6"/><rect x="-1.9" y="-2.1" width="4.2" height="4.6" rx="1.1" fill="none" stroke="#fcd4c6" stroke-width="0.9"/></g><g transform="translate(321.8 209.6)"><circle r="1.7" fill="#fff" stroke="#1e2a34" stroke-width="0.95"/></g><g transform="translate(314.40000000000003 209.6)"><rect x="-3.8" y="-3.9" width="7.6" height="7.8" rx="1.6" fill="#ef6446"/><rect x="-3.8" y="-3.9" width="7.6" height="3" rx="1.6" fill="#f58c74" opacity="0.6"/><rect x="-1.9" y="-2.1" width="4.2" height="4.6" rx="1.1" fill="none" stroke="#fcd4c6" stroke-width="0.9"/></g><g transform="translate(243.6 219.4)"><rect x="-2.4" y="-4.6" width="6.6" height="6.8" rx="1.4" fill="#ef6446"/><rect x="-0.9" y="-3.1" width="3.6" height="3.8" rx="0.9" fill="none" stroke="#fcd4c6" stroke-width="0.8"/><circle cx="-1.8" cy="2" r="2.7" fill="#5cb444"/><path d="M-3.4 2h3.2M-1.8 0.6v2.8" stroke="#dcf2cc" stroke-width="0.7"/></g><g transform="translate(196.4 228)"><circle r="1.7" fill="#fff" stroke="#1e2a34" stroke-width="0.95"/></g><g transform="translate(202.20000000000002 228)"><rect x="-3.8" y="-3.9" width="7.6" height="7.8" rx="1.6" fill="#ef6446"/><rect x="-3.8" y="-3.9" width="7.6" height="3" rx="1.6" fill="#f58c74" opacity="0.6"/><rect x="-1.9" y="-2.1" width="4.2" height="4.6" rx="1.1" fill="none" stroke="#fcd4c6" stroke-width="0.9"/></g><g transform="translate(321.8 228)"><circle r="1.7" fill="#fff" stroke="#1e2a34" stroke-width="0.95"/></g><g transform="translate(314.40000000000003 228)"><rect x="-3.8" y="-3.9" width="7.6" height="7.8" rx="1.6" fill="#ef6446"/><rect x="-3.8" y="-3.9" width="7.6" height="3" rx="1.6" fill="#f58c74" opacity="0.6"/><rect x="-1.9" y="-2.1" width="4.2" height="4.6" rx="1.1" fill="none" stroke="#fcd4c6" stroke-width="0.9"/></g><g transform="translate(243.6 237.6)"><rect x="-2.4" y="-4.6" width="6.6" height="6.8" rx="1.4" fill="#ef6446"/><rect x="-0.9" y="-3.1" width="3.6" height="3.8" rx="0.9" fill="none" stroke="#fcd4c6" stroke-width="0.8"/><circle cx="-1.8" cy="2" r="2.7" fill="#5cb444"/><path d="M-3.4 2h3.2M-1.8 0.6v2.8" stroke="#dcf2cc" stroke-width="0.7"/></g><g transform="translate(196.4 245.5)"><circle r="1.7" fill="#fff" stroke="#1e2a34" stroke-width="0.95"/></g><g transform="translate(202.20000000000002 245.5)"><path d="M-3.4 3v-5.4l2.2 2.2 1.6-3 1.8 3.4 1.4-1.2v4z" fill="#e03820"/><path d="M-3.4 3.2h7" stroke="#f0b030" stroke-width="1"/></g><g transform="translate(321.8 245.5)"><circle r="1.7" fill="#fff" stroke="#1e2a34" stroke-width="0.95"/></g><g transform="translate(314.40000000000003 245.5)"><rect x="-3.8" y="-3.9" width="7.6" height="7.8" rx="1.6" fill="#ef6446"/><rect x="-3.8" y="-3.9" width="7.6" height="3" rx="1.6" fill="#f58c74" opacity="0.6"/><rect x="-1.9" y="-2.1" width="4.2" height="4.6" rx="1.1" fill="none" stroke="#fcd4c6" stroke-width="0.9"/></g><g transform="translate(196.4 254.6)"><circle r="1.7" fill="#fff" stroke="#1e2a34" stroke-width="0.95"/></g><g transform="translate(202.20000000000002 254.6)"><rect x="-3.8" y="-3.9" width="7.6" height="7.8" rx="1.6" fill="#ef6446"/><rect x="-3.8" y="-3.9" width="7.6" height="3" rx="1.6" fill="#f58c74" opacity="0.6"/><rect x="-1.9" y="-2.1" width="4.2" height="4.6" rx="1.1" fill="none" stroke="#fcd4c6" stroke-width="0.9"/></g><g transform="translate(243.6 264)"><rect x="-2.4" y="-4.6" width="6.6" height="6.8" rx="1.4" fill="#ef6446"/><rect x="-0.9" y="-3.1" width="3.6" height="3.8" rx="0.9" fill="none" stroke="#fcd4c6" stroke-width="0.8"/><circle cx="-1.8" cy="2" r="2.7" fill="#5cb444"/><path d="M-3.4 2h3.2M-1.8 0.6v2.8" stroke="#dcf2cc" stroke-width="0.7"/></g><g transform="translate(196.4 272.6)"><circle r="1.7" fill="#fff" stroke="#1e2a34" stroke-width="0.95"/></g><g transform="translate(202.20000000000002 272.6)"><rect x="-3.8" y="-3.9" width="7.6" height="7.8" rx="1.6" fill="#ef6446"/><rect x="-3.8" y="-3.9" width="7.6" height="3" rx="1.6" fill="#f58c74" opacity="0.6"/><rect x="-1.9" y="-2.1" width="4.2" height="4.6" rx="1.1" fill="none" stroke="#fcd4c6" stroke-width="0.9"/></g><g transform="translate(321.8 272.6)"><circle r="1.7" fill="#fff" stroke="#1e2a34" stroke-width="0.95"/></g><g transform="translate(314.40000000000003 272.6)"><rect x="-3.8" y="-3.9" width="7.6" height="7.8" rx="1.6" fill="#ef6446"/><rect x="-3.8" y="-3.9" width="7.6" height="3" rx="1.6" fill="#f58c74" opacity="0.6"/><rect x="-1.9" y="-2.1" width="4.2" height="4.6" rx="1.1" fill="none" stroke="#fcd4c6" stroke-width="0.9"/></g><g transform="translate(243.6 281.8)"><rect x="-2.4" y="-4.6" width="6.6" height="6.8" rx="1.4" fill="#ef6446"/><rect x="-0.9" y="-3.1" width="3.6" height="3.8" rx="0.9" fill="none" stroke="#fcd4c6" stroke-width="0.8"/><circle cx="-1.8" cy="2" r="2.7" fill="#5cb444"/><path d="M-3.4 2h3.2M-1.8 0.6v2.8" stroke="#dcf2cc" stroke-width="0.7"/></g><g transform="translate(196.4 290)"><circle r="1.7" fill="#fff" stroke="#1e2a34" stroke-width="0.95"/></g><g transform="translate(202.20000000000002 290)"><path d="M-3.4 3v-5.4l2.2 2.2 1.6-3 1.8 3.4 1.4-1.2v4z" fill="#e03820"/><path d="M-3.4 3.2h7" stroke="#f0b030" stroke-width="1"/></g><g transform="translate(321.8 290)"><circle r="1.7" fill="#fff" stroke="#1e2a34" stroke-width="0.95"/></g><g transform="translate(314.40000000000003 290)"><rect x="-3.8" y="-3.9" width="7.6" height="7.8" rx="1.6" fill="#ef6446"/><rect x="-3.8" y="-3.9" width="7.6" height="3" rx="1.6" fill="#f58c74" opacity="0.6"/><rect x="-1.9" y="-2.1" width="4.2" height="4.6" rx="1.1" fill="none" stroke="#fcd4c6" stroke-width="0.9"/></g><g transform="translate(196.4 299)"><circle r="1.7" fill="#fff" stroke="#1e2a34" stroke-width="0.95"/></g><g transform="translate(202.20000000000002 299)"><rect x="-3.8" y="-3.9" width="7.6" height="7.8" rx="1.6" fill="#ef6446"/><rect x="-3.8" y="-3.9" width="7.6" height="3" rx="1.6" fill="#f58c74" opacity="0.6"/><rect x="-1.9" y="-2.1" width="4.2" height="4.6" rx="1.1" fill="none" stroke="#fcd4c6" stroke-width="0.9"/></g><g transform="translate(243.6 308.8)"><rect x="-2.4" y="-4.6" width="6.6" height="6.8" rx="1.4" fill="#ef6446"/><rect x="-0.9" y="-3.1" width="3.6" height="3.8" rx="0.9" fill="none" stroke="#fcd4c6" stroke-width="0.8"/><circle cx="-1.8" cy="2" r="2.7" fill="#5cb444"/><path d="M-3.4 2h3.2M-1.8 0.6v2.8" stroke="#dcf2cc" stroke-width="0.7"/></g><g transform="translate(196.4 317)"><circle r="1.7" fill="#fff" stroke="#1e2a34" stroke-width="0.95"/></g><g transform="translate(202.20000000000002 317)"><path d="M-3.4 3v-5.4l2.2 2.2 1.6-3 1.8 3.4 1.4-1.2v4z" fill="#e03820"/><path d="M-3.4 3.2h7" stroke="#f0b030" stroke-width="1"/></g><g transform="translate(321.8 317)"><circle r="1.7" fill="#fff" stroke="#1e2a34" stroke-width="0.95"/></g><g transform="translate(314.40000000000003 317)"><rect x="-3.8" y="-3.9" width="7.6" height="7.8" rx="1.6" fill="#ef6446"/><rect x="-3.8" y="-3.9" width="7.6" height="3" rx="1.6" fill="#f58c74" opacity="0.6"/><rect x="-1.9" y="-2.1" width="4.2" height="4.6" rx="1.1" fill="none" stroke="#fcd4c6" stroke-width="0.9"/></g><g transform="translate(196.4 326)"><circle r="1.7" fill="#fff" stroke="#1e2a34" stroke-width="0.95"/></g><g transform="translate(202.20000000000002 326)"><rect x="-3.8" y="-3.9" width="7.6" height="7.8" rx="1.6" fill="#ef6446"/><rect x="-3.8" y="-3.9" width="7.6" height="3" rx="1.6" fill="#f58c74" opacity="0.6"/><rect x="-1.9" y="-2.1" width="4.2" height="4.6" rx="1.1" fill="none" stroke="#fcd4c6" stroke-width="0.9"/></g><rect x="348.2" y="210.5" width="89.60000000000002" height="34.80000000000001" rx="2.6" fill="#b1c8e2" stroke="#4a5a66" stroke-width="0.9"/><path d="M348.65 221V213.5q0-2.55 2.6-2.55H434.75q2.6 0 2.6 2.55V221z" fill="url(#hd)"/><path d="M348.2 221.2H437.8" stroke="#4a5a66" stroke-width="0.9"/><path d="M351.4 219.2c0-3 1.2-5.6 3.4-5.6s3.4 2.6 3.4 5.6z" fill="#1c1c1c"/><circle cx="354.8" cy="214.6" r="1.5" fill="#3a3a3a"/><g transform="translate(348.2 227.8)"><circle r="1.7" fill="#fff" stroke="#1e2a34" stroke-width="0.95"/></g><g transform="translate(354.0 227.8)"><rect x="-3.8" y="-3.9" width="7.6" height="7.8" rx="1.6" fill="#ef6446"/><rect x="-3.8" y="-3.9" width="7.6" height="3" rx="1.6" fill="#f58c74" opacity="0.6"/><rect x="-1.9" y="-2.1" width="4.2" height="4.6" rx="1.1" fill="none" stroke="#fcd4c6" stroke-width="0.9"/></g><g transform="translate(348.2 236.8)"><circle r="1.7" fill="#fff" stroke="#1e2a34" stroke-width="0.95"/></g><g transform="translate(354.0 236.8)"><rect x="-3.8" y="-3.9" width="7.6" height="7.8" rx="1.6" fill="#ef6446"/><rect x="-3.8" y="-3.9" width="7.6" height="3" rx="1.6" fill="#f58c74" opacity="0.6"/><rect x="-1.9" y="-2.1" width="4.2" height="4.6" rx="1.1" fill="none" stroke="#fcd4c6" stroke-width="0.9"/></g><g transform="translate(437.8 227.8)"><circle r="1.7" fill="#fff" stroke="#1e2a34" stroke-width="0.95"/></g><g transform="translate(430.40000000000003 227.8)"><path d="M-3.4 2.6h2.1v-5.2h2.6v5.2h2.1" fill="none" stroke="#0e1a24" stroke-width="1.05"/></g><g transform="translate(437.8 236.8)"><circle r="1.7" fill="#fff" stroke="#1e2a34" stroke-width="0.95"/></g><g transform="translate(430.40000000000003 236.8)"><path d="M-3.4 2.6h2.1v-5.2h2.6v5.2h2.1" fill="none" stroke="#0e1a24" stroke-width="1.05"/></g><rect x="348.2" y="254.8" width="44.80000000000001" height="26.19999999999999" rx="3" fill="#fdf1e2" stroke="#e9896a" stroke-width="0.9"/><path d="M348.65 266.6V258.2q0-2.95 3-2.95H389.55q3 0 3 2.95V266.6z" fill="url(#hb)"/><path d="M351.6 262.6a3.3 3.3 0 0 1 6.6 0z" fill="#e03030"/><rect x="351" y="262.4" width="7.8" height="1.6" rx="0.6" fill="#8a8a8a"/><g transform="translate(348.2 272.6)"><circle r="1.6" fill="#fff" stroke="#e0785a" stroke-width="0.9"/></g><g transform="translate(354.2 272.6)"><rect x="-3.8" y="-3.9" width="7.6" height="7.8" rx="1.6" fill="#ef6446"/><rect x="-3.8" y="-3.9" width="7.6" height="3" rx="1.6" fill="#f58c74" opacity="0.6"/><rect x="-1.9" y="-2.1" width="4.2" height="4.6" rx="1.1" fill="none" stroke="#fcd4c6" stroke-width="0.9"/></g><g transform="translate(386.2 272.6)"><rect x="-3.8" y="-3.9" width="7.6" height="7.8" rx="1.6" fill="#ef6446"/><rect x="-3.8" y="-3.9" width="7.6" height="3" rx="1.6" fill="#f58c74" opacity="0.6"/><rect x="-1.9" y="-2.1" width="4.2" height="4.6" rx="1.1" fill="none" stroke="#fcd4c6" stroke-width="0.9"/></g><g transform="translate(393 272.6)"><circle r="1.6" fill="#fff" stroke="#e0785a" stroke-width="0.9"/></g><rect x="464.5" y="175" width="98.70000000000005" height="70.30000000000001" rx="2.6" fill="#b1c8e2" stroke="#4a5a66" stroke-width="0.9"/><path d="M464.95 186V178q0-2.55 2.6-2.55H560.1500000000001q2.6 0 2.6 2.55V186z" fill="url(#hd)"/><path d="M464.5 186.2H563.2" stroke="#4a5a66" stroke-width="0.9"/><path d="M464.5 188.2H533.5q3 0 3 3V210.8q0 3-3 3H464.5z" fill="#8ccbf6" stroke="#2c4a68" stroke-width="0.9"/><rect x="467" y="178.4" width="8" height="4.6" rx="0.6" fill="#20303c"/><path d="M468.4 181.8v-2M470.2 181.8v-2M472 181.8v-2M473.6 181.8v-2" stroke="#e8f0f4" stroke-width="0.7"/><g transform="translate(556 181)"><path d="M-3.2 -3l6 6.2" stroke="#e6d8a8" stroke-width="1"/><path d="M-3 3.2l5.4-5.8" stroke="#8a4a22" stroke-width="1.5"/><path d="M-3.4 -3.2l1.6 1.6" stroke="#d8c890" stroke-width="1.6"/></g><rect x="470.6" y="189.6" width="4.6" height="4.6" rx="0.6" fill="#7ac060"/><g transform="translate(464.5 200.8)"><circle r="1.7" fill="#fff" stroke="#1e2a34" stroke-width="0.95"/></g><g transform="translate(470.3 200.8)"><path d="M-3.4 2.6h2.1v-5.2h2.6v5.2h2.1" fill="none" stroke="#0e1a24" stroke-width="1.05"/></g><g transform="translate(464.5 209.6)"><circle r="1.7" fill="#fff" stroke="#1e2a34" stroke-width="0.95"/></g><rect x="466.7" y="206.50" width="9" height="6.2" fill="#fa66fa"/><g transform="translate(464.5 218.8)"><circle r="1.7" fill="#fff" stroke="#1e2a34" stroke-width="0.95"/></g><g transform="translate(470.3 218.8)"><path d="M-3.4 2.6h2.1v-5.2h2.6v5.2h2.1" fill="none" stroke="#0e1a24" stroke-width="1.05"/></g><g transform="translate(464.5 227.8)"><circle r="1.7" fill="#fff" stroke="#1e2a34" stroke-width="0.95"/></g><g transform="translate(470.3 227.8)"><path d="M-3.4 2.6h2.1v-5.2h2.6v5.2h2.1" fill="none" stroke="#0e1a24" stroke-width="1.05"/></g><g transform="translate(464.5 236.8)"><circle r="1.7" fill="#fff" stroke="#1e2a34" stroke-width="0.95"/></g><g transform="translate(470.3 236.8)"><path d="M-3.4 2.6h2.1v-5.2h2.6v5.2h2.1" fill="none" stroke="#0e1a24" stroke-width="1.05"/></g><g transform="translate(563.2 192.2)"><circle r="1.7" fill="#fff" stroke="#1e2a34" stroke-width="0.95"/></g><rect x="551.0" y="189.10" width="9.4" height="6.2" fill="#fa66fa"/></svg>
<span class="t" style="top:78.96px;font-size:5.9px;line-height:7.08px;color:#2a1408;font-weight:bold;left:209.4px;">Arduino Nano</span>
<span class="t" style="left:202px;top:91.4px;font-size:4.6px;line-height:6px;color:#2a5a88;font-weight:bold">1<span style="color:#58a838">2</span><span style="color:#d08a30">3</span></span>
<span class="t" style="top:89.94px;font-size:6.1px;line-height:7.32px;color:#0e446f;left:212px;-webkit-text-stroke:0.14px #0e446f;">Modules.EEPROM Elements.Integer1</span>
<span class="t" style="top:98.64px;font-size:6.1px;line-height:7.32px;color:#0c2034;left:208px;-webkit-text-stroke:0.15px #0c2034;">Remember</span>
<span class="t" style="top:107.54px;font-size:6.1px;line-height:7.32px;color:#0c2034;left:208px;-webkit-text-stroke:0.15px #0c2034;">Recall</span>
<span class="t" style="top:117.47px;font-size:6.04px;line-height:7.25px;color:#9a10b4;left:198.9px;-webkit-text-stroke:0.15px #9a10b4;">I32</span>
<span class="t" style="top:116.64px;font-size:6.1px;line-height:7.32px;color:#0c2034;left:208px;-webkit-text-stroke:0.15px #0c2034;">In</span>
<span class="t" style="top:99.30px;font-size:6.33px;line-height:7.6px;color:#9a10b4;left:309.9px;-webkit-text-stroke:0.15px #9a10b4;">I32</span>
<span class="t" style="top:98.64px;font-size:6.1px;line-height:7.32px;color:#0c2034;right:438.5px;-webkit-text-stroke:0.15px #0c2034;">Out</span>
<span class="t" style="top:125.94px;font-size:6.1px;line-height:7.32px;color:#0e446f;left:159.2px;width:200px;text-align:center;-webkit-text-stroke:0.14px #0e446f;">Serial[0]</span>
<span class="t" style="top:134.97px;font-size:6.04px;line-height:7.25px;color:#9a10b4;left:198.9px;-webkit-text-stroke:0.15px #9a10b4;">I32</span>
<span class="t" style="top:134.14px;font-size:6.1px;line-height:7.32px;color:#0c2034;left:208px;-webkit-text-stroke:0.15px #0c2034;">In</span>
<span class="t" style="top:134.14px;font-size:6.1px;line-height:7.32px;color:#0c2034;right:437.8px;-webkit-text-stroke:0.15px #0c2034;">Out</span>
<span class="t" style="top:143.14px;font-size:6.1px;line-height:7.32px;color:#0c2034;right:437.8px;-webkit-text-stroke:0.15px #0c2034;">Sending</span>
<span class="t" style="top:152.14px;font-size:6.1px;line-height:7.32px;color:#0e446f;left:158.6px;width:200px;text-align:center;-webkit-text-stroke:0.14px #0e446f;">I2C</span>
<span class="t" style="top:160.40px;font-size:5px;line-height:6px;color:#2020a0;font-weight:bold;left:198.6px;">I²C</span>
<span class="t" style="top:160.84px;font-size:6.1px;line-height:7.32px;color:#0c2034;left:208px;-webkit-text-stroke:0.15px #0c2034;">In</span>
<span class="t" style="top:161.14px;font-size:6.1px;line-height:7.32px;color:#0c2034;right:437.8px;-webkit-text-stroke:0.15px #0c2034;">Out</span>
<span class="t" style="top:170.14px;font-size:6.1px;line-height:7.32px;color:#0c2034;right:437.8px;-webkit-text-stroke:0.15px #0c2034;">Request</span>
<span class="t" style="top:180.14px;font-size:6.1px;line-height:7.32px;color:#0e446f;left:242.6px;-webkit-text-stroke:0.14px #0e446f;">Digital(RX)[ 0 ]</span>
<span class="t" style="top:188.34px;font-size:6.1px;line-height:7.32px;color:#0c2034;left:208px;-webkit-text-stroke:0.15px #0c2034;">Digital</span>
<span class="t" style="top:188.34px;font-size:6.1px;line-height:7.32px;color:#0c2034;right:437.8px;-webkit-text-stroke:0.15px #0c2034;">Out</span>
<span class="t" style="top:198.14px;font-size:6.1px;line-height:7.32px;color:#0e446f;left:243.6px;-webkit-text-stroke:0.14px #0e446f;">Digital(TX)[ 1 ]</span>
<span class="t" style="top:205.74px;font-size:6.1px;line-height:7.32px;color:#0c2034;left:208px;-webkit-text-stroke:0.15px #0c2034;">Digital</span>
<span class="t" style="top:205.74px;font-size:6.1px;line-height:7.32px;color:#0c2034;right:437.8px;-webkit-text-stroke:0.15px #0c2034;">Out</span>
<span class="t" style="top:215.54px;font-size:6.1px;line-height:7.32px;color:#0e446f;left:249.6px;-webkit-text-stroke:0.14px #0e446f;">Digital[ 2 ]</span>
<span class="t" style="top:224.14px;font-size:6.1px;line-height:7.32px;color:#0c2034;left:208px;-webkit-text-stroke:0.15px #0c2034;">Digital</span>
<span class="t" style="top:224.14px;font-size:6.1px;line-height:7.32px;color:#0c2034;right:437.8px;-webkit-text-stroke:0.15px #0c2034;">Out</span>
<span class="t" style="top:233.74px;font-size:6.1px;line-height:7.32px;color:#0e446f;left:249.6px;-webkit-text-stroke:0.14px #0e446f;">Digital[ 3 ]</span>
<span class="t" style="top:241.64px;font-size:6.1px;line-height:7.32px;color:#0c2034;left:208px;-webkit-text-stroke:0.15px #0c2034;">Analog</span>
<span class="t" style="top:241.64px;font-size:6.1px;line-height:7.32px;color:#0c2034;right:437.8px;-webkit-text-stroke:0.15px #0c2034;">Out</span>
<span class="t" style="top:250.74px;font-size:6.1px;line-height:7.32px;color:#0c2034;left:208px;-webkit-text-stroke:0.15px #0c2034;">Digital</span>
<span class="t" style="top:260.14px;font-size:6.1px;line-height:7.32px;color:#0e446f;left:249.6px;-webkit-text-stroke:0.14px #0e446f;">Digital[ 4 ]</span>
<span class="t" style="top:268.74px;font-size:6.1px;line-height:7.32px;color:#0c2034;left:208px;-webkit-text-stroke:0.15px #0c2034;">Digital</span>
<span class="t" style="top:268.74px;font-size:6.1px;line-height:7.32px;color:#0c2034;right:437.8px;-webkit-text-stroke:0.15px #0c2034;">Out</span>
<span class="t" style="top:277.94px;font-size:6.1px;line-height:7.32px;color:#0e446f;left:249.6px;-webkit-text-stroke:0.14px #0e446f;">Digital[ 5 ]</span>
<span class="t" style="top:286.14px;font-size:6.1px;line-height:7.32px;color:#0c2034;left:208px;-webkit-text-stroke:0.15px #0c2034;">Analog</span>
<span class="t" style="top:286.14px;font-size:6.1px;line-height:7.32px;color:#0c2034;right:437.8px;-webkit-text-stroke:0.15px #0c2034;">Out</span>
<span class="t" style="top:295.14px;font-size:6.1px;line-height:7.32px;color:#0c2034;left:208px;-webkit-text-stroke:0.15px #0c2034;">Digital</span>
<span class="t" style="top:304.94px;font-size:6.1px;line-height:7.32px;color:#0e446f;left:249.6px;-webkit-text-stroke:0.14px #0e446f;">Digital[ 6 ]</span>
<span class="t" style="top:313.14px;font-size:6.1px;line-height:7.32px;color:#0c2034;left:208px;-webkit-text-stroke:0.15px #0c2034;">Analog</span>
<span class="t" style="top:313.14px;font-size:6.1px;line-height:7.32px;color:#0c2034;right:437.8px;-webkit-text-stroke:0.15px #0c2034;">Out</span>
<span class="t" style="top:322.14px;font-size:6.1px;line-height:7.32px;color:#0c2034;left:208px;-webkit-text-stroke:0.15px #0c2034;">Digital</span>
<span class="t" style="top:212.66px;font-size:5.9px;line-height:7.08px;color:#2a1408;font-weight:bold;left:362.4px;">RotaryEncoderSensor1</span>
<span class="t" style="top:223.94px;font-size:6.1px;line-height:7.32px;color:#0c2034;left:360.5px;-webkit-text-stroke:0.15px #0c2034;">Clock(A)</span>
<span class="t" style="top:232.94px;font-size:6.1px;line-height:7.32px;color:#0c2034;left:360.5px;-webkit-text-stroke:0.15px #0c2034;">Direction(B)</span>
<span class="t" style="top:223.94px;font-size:6.1px;line-height:7.32px;color:#0c2034;right:322.6px;-webkit-text-stroke:0.15px #0c2034;">Up</span>
<span class="t" style="top:232.94px;font-size:6.1px;line-height:7.32px;color:#0c2034;right:322.6px;-webkit-text-stroke:0.15px #0c2034;">Down</span>
<span class="t" style="top:257.55px;font-size:6.09px;line-height:7.31px;color:#222;font-weight:bold;left:361.6px;">Button1</span>
<span class="t" style="top:268.54px;font-size:6.1px;line-height:7.32px;color:#0c2034;left:360.6px;-webkit-text-stroke:0.15px #0c2034;">In</span>
<span class="t" style="top:268.54px;font-size:6.1px;line-height:7.32px;color:#0c2034;left:371px;-webkit-text-stroke:0.15px #0c2034;">Out</span>
<span class="t" style="top:177.11px;font-size:6.16px;line-height:7.39px;color:#2a1408;font-weight:bold;left:477px;">UpDownCounter1</span>
<span class="t" style="left:467.4px;top:191.4px;font-size:4.4px;line-height:6px;color:#2a5a88;font-weight:bold">1<span style="color:#58a838">2</span></span>
<span class="t" style="top:188.54px;font-size:6.1px;line-height:7.32px;color:#0e446f;left:477px;-webkit-text-stroke:0.14px #0e446f;">Elements.Set Value1</span>
<span class="t" style="top:196.94px;font-size:6.1px;line-height:7.32px;color:#0c2034;left:477px;-webkit-text-stroke:0.15px #0c2034;">In</span>
<span class="t" style="top:206.57px;font-size:6.04px;line-height:7.25px;color:#9a10b4;left:467px;-webkit-text-stroke:0.15px #9a10b4;">I32</span>
<span class="t" style="top:205.74px;font-size:6.1px;line-height:7.32px;color:#0c2034;left:477px;-webkit-text-stroke:0.15px #0c2034;">Value</span>
<span class="t" style="top:214.94px;font-size:6.1px;line-height:7.32px;color:#0c2034;left:477px;-webkit-text-stroke:0.15px #0c2034;">Reset</span>
<span class="t" style="top:223.94px;font-size:6.1px;line-height:7.32px;color:#0c2034;left:477px;-webkit-text-stroke:0.15px #0c2034;">Up</span>
<span class="t" style="top:232.94px;font-size:6.1px;line-height:7.32px;color:#0c2034;left:477px;-webkit-text-stroke:0.15px #0c2034;">Down</span>
<span class="t" style="top:189.00px;font-size:6.33px;line-height:7.6px;color:#9a10b4;left:551.3px;-webkit-text-stroke:0.15px #9a10b4;">I32</span>
<span class="t" style="top:188.34px;font-size:6.1px;line-height:7.32px;color:#0c2034;right:197.1px;-webkit-text-stroke:0.15px #0c2034;">Out</span>
</div></div>
<div style="left:588.6px;top:54.6px;width:10px;height:275px;background:#f0f0f0;"></div>
<div style="left:589.6px;top:104px;width:7.6px;height:82.8px;background:#cdcdcd;"></div>
<svg style="left:589px;top:57px" width="10" height="8" viewBox="0 0 10 8"><path d="M2.4 5.2l2.4-2.4 2.4 2.4" stroke="#444" stroke-width="0.9" fill="none"/></svg>
<svg style="left:589px;top:320px" width="10" height="8" viewBox="0 0 10 8"><path d="M2.4 3l2.4 2.4 2.4-2.4" stroke="#444" stroke-width="0.9" fill="none"/></svg>
<div style="left:137.8px;top:329.6px;width:461.6px;height:10.6px;background:#f0f0f0;"></div>
<div style="left:208px;top:330.8px;width:293.6px;height:7.4px;background:#cdcdcd;"></div>
<svg style="left:141px;top:330px" width="8" height="10" viewBox="0 0 8 10"><path d="M5.2 2.4l-2.4 2.4 2.4 2.4" stroke="#444" stroke-width="0.9" fill="none"/></svg>
<svg style="left:580px;top:330px" width="8" height="10" viewBox="0 0 8 10"><path d="M2.8 2.4l2.4 2.4-2.4 2.4" stroke="#444" stroke-width="0.9" fill="none"/></svg>
<div style="left:599.4px;top:43.5px;width:144.8px;height:481px;background:#f0f0f0;"></div>
<div style="left:599.4px;top:43.5px;width:144.8px;height:13.6px;background:#fafafa;"></div>
<div style="left:602.8px;top:44.2px;width:62.6px;height:11.6px;background:#fff;border:1.2px solid #9cc6e0;border-radius:1.2px;"></div>
<span class="t" style="top:46.47px;font-size:6.22px;line-height:7.46px;color:#222;left:605.4px;">invert</span>
<svg style="left:666px;top:43px" width="80" height="14" viewBox="666 43 80 14">
<path d="M670 46.6l5.6 6.6M675.6 46.6l-5.6 6.6" stroke="#d02828" stroke-width="1.4"/><path d="M671.6 45.4l2.6 1" stroke="#6a8a4a" stroke-width="1.2"/>
<rect x="679.8" y="44.2" width="10.8" height="11.6" fill="#b6cbe8" stroke="#92b2de" stroke-width="0.5"/><path d="M685.2 45.6l2 5.4h-4z" fill="#3848a8"/><ellipse cx="685.2" cy="52" rx="3.8" ry="1.5" fill="#3848a8"/><path d="M683.4 50.6h3.6" stroke="#d8a030" stroke-width="0.7"/>
<path d="M692 49.2h3l-1.5 1.8z" fill="#111"/>
<path d="M698.4 47.2h3l0.8 0.8h4.2v5.6h-8z" fill="#f2d870" stroke="#c8a430" stroke-width="0.5"/><circle cx="705" cy="52.4" r="1.5" fill="#f8f0c0" stroke="#b89830" stroke-width="0.4"/>
<rect x="711" y="48" width="7.6" height="5.6" rx="0.8" fill="#48b0d8"/><rect x="712.4" y="46.6" width="3.4" height="2" fill="#f0c840"/><rect x="714.6" y="50.8" width="4.2" height="3.2" fill="#f0d060"/>
<rect x="723" y="48" width="7.6" height="5.6" rx="0.8" fill="#48b0d8"/><rect x="724.4" y="46.6" width="3.4" height="2" fill="#f0c840"/><rect x="726.6" y="50.8" width="4.2" height="3.2" fill="#5ac060"/>
<path d="M735 46.2l7.6 7.6" stroke="#2a62b8" stroke-width="1.5"/><path d="M742.8 46l-7.8 7.8" stroke="#d84838" stroke-width="1.3"/>
</svg>
<div style="left:602.6px;top:60px;width:45.8px;height:44.6px;background:#fff;border:1.4px solid #1e1e1e;border-radius:3.6px;"></div>
<div style="left:603.8px;top:61.2px;width:43.4px;height:10.4px;background:linear-gradient(#4a4a4a,#8e8e8e);border-radius:2.2px 2.2px 0 0;"></div>
<svg style="left:605.6px;top:62.2px" width="9" height="8" viewBox="0 0 9 8"><rect x="0.6" y="2.8" width="5.4" height="4.2" fill="#dfe6ee"/><path d="M1.6 2.8l1.6-2 2.4 1.2" stroke="#f0f0f0" stroke-width="0.9" fill="none"/><circle cx="6.6" cy="5.6" r="1.4" fill="#c0d0e0"/></svg>
<span class="t" style="top:62.18px;font-size:6.2px;line-height:7.44px;color:#fff;left:616.6px;">Gates</span>
<div style="left:609.4px;top:77.2px;width:19.2px;height:19.8px;background:#c9def5;border:1px solid #7a9ad8;border-radius:1.6px;"></div>
<div style="left:612.4px;top:80.4px;width:13.2px;height:13.4px;background:linear-gradient(160deg,#fbd2b8,#f49a78 35%,#e24a3a 70%,#f07a3c);border-radius:1.2px;transform:skewY(9deg);"></div>
<span class="t" style="left:599px;top:80.7px;width:40px;text-align:center;font-size:11.6px;line-height:13px;font-weight:bold;color:#1c1c8c;transform:scaleX(0.64);text-shadow:0 0 0.7px #fff,0 0 0.7px #fff,0 0 1px #fff;">NOT</span>
<div style="left:602.6px;top:109.8px;width:45.8px;height:44px;background:#fff;border:1.4px solid #1e1e1e;border-radius:3.6px;"></div>
<div style="left:603.8px;top:111px;width:43.4px;height:10.4px;background:linear-gradient(#4a4a4a,#8e8e8e);border-radius:2.2px 2.2px 0 0;"></div>
<svg style="left:605.6px;top:112.0px" width="9" height="8" viewBox="0 0 9 8"><rect x="0.6" y="2.8" width="5.4" height="4.2" fill="#dfe6ee"/><path d="M1.6 2.8l1.6-2 2.4 1.2" stroke="#f0f0f0" stroke-width="0.9" fill="none"/><circle cx="6.6" cy="5.6" r="1.4" fill="#c0d0e0"/></svg>
<span class="t" style="top:111.98px;font-size:6.2px;line-height:7.44px;color:#fff;left:616.6px;">Boolean</span>
<div style="left:603.6px;top:110.8px;width:43.8px;height:10.6px;background:linear-gradient(#c86a5a,#b88078);border-radius:2.6px 2.6px 0 0;opacity:0.55;"></div>
<div style="left:609.4px;top:127.2px;width:19.2px;height:19.6px;background:#6c6c6c;border:1px solid #454545;border-radius:2px;"></div>
<div style="left:612.4px;top:130.4px;width:13.2px;height:13.2px;background:linear-gradient(160deg,#f0a090,#e05a48 40%,#cc2c2c 75%,#e8683c);border-radius:1.2px;transform:skewY(9deg);"></div>
<span class="t" style="left:599px;top:130.6px;width:40px;text-align:center;font-size:11.6px;line-height:13px;font-weight:bold;color:#1c1c8c;transform:scaleX(0.64);text-shadow:0 0 0.7px #fff,0 0 0.7px #fff,0 0 1px #fff;">NOT</span>
<div style="left:603.4px;top:158.8px;width:45.2px;height:44.4px;background:#fff;border:1px solid #d2d2d2;border-radius:3px;"></div>
<div style="left:604px;top:159.4px;width:44px;height:11px;background:linear-gradient(#d8d8d8,#ececec);border-radius:2.4px 2.4px 0 0;"></div>
<svg style="left:606.8px;top:161.20000000000002px" width="8" height="7" viewBox="0 0 8 7"><path d="M1 4.6h3.6l2-2.6M4.6 4.6l2 1" stroke="#aaa" stroke-width="0.8" fill="none"/><circle cx="1.6" cy="2.6" r="1.1" fill="#bbb"/></svg>
<span class="t" style="top:160.98px;font-size:6.2px;line-height:7.44px;color:#f6f6f6;left:616.4px;">Multiplex</span>
<div style="left:610.6px;top:176px;width:19.6px;height:20px;background:#e8e8e8;border:1px solid #dcdcdc;border-radius:2px;"></div>
<div style="left:613.6px;top:179.2px;width:13.6px;height:13.6px;background:linear-gradient(160deg,#f3ecec,#ead8de 55%,#efe2e2);border-radius:1.2px;transform:skewY(9deg);"></div>
<span class="t" style="left:600.4px;top:179.6px;width:40px;text-align:center;font-size:11.6px;line-height:13px;font-weight:bold;color:#c4c6e6;transform:scaleX(0.64);text-shadow:0 0 0.7px #fff;">NOT</span>
<div style="left:652.4px;top:60px;width:69.4px;height:118.8px;background:#fff;border:1.4px solid #1e1e1e;border-radius:3.6px;"></div>
<div style="left:653.6px;top:61.2px;width:67px;height:10.4px;background:linear-gradient(#4a4a4a,#8e8e8e);border-radius:2.2px 2.2px 0 0;"></div>
<svg style="left:655.4px;top:62.2px" width="9" height="8" viewBox="0 0 9 8"><rect x="0.6" y="2.8" width="5.4" height="4.2" fill="#dfe6ee"/><path d="M1.6 2.8l1.6-2 2.4 1.2" stroke="#f0f0f0" stroke-width="0.9" fill="none"/><circle cx="6.6" cy="5.6" r="1.4" fill="#c0d0e0"/></svg>
<span class="t" style="top:62.18px;font-size:6.2px;line-height:7.44px;color:#fff;left:665.6px;">Filters</span>
<div style="left:658.6px;top:77.8px;width:45.4px;height:44.6px;background:#fff;border:1.4px solid #1e1e1e;border-radius:3.6px;"></div>
<div style="left:659.8px;top:79px;width:43px;height:10.4px;background:linear-gradient(#4a4a4a,#8e8e8e);border-radius:2.2px 2.2px 0 0;"></div>
<svg style="left:661.6px;top:80.0px" width="9" height="8" viewBox="0 0 9 8"><rect x="0.6" y="2.8" width="5.4" height="4.2" fill="#dfe6ee"/><path d="M1.6 2.8l1.6-2 2.4 1.2" stroke="#f0f0f0" stroke-width="0.9" fill="none"/><circle cx="6.6" cy="5.6" r="1.4" fill="#c0d0e0"/></svg>
<span class="t" style="top:79.98px;font-size:6.2px;line-height:7.44px;color:#fff;left:672px;">Boolean...</span>
<div style="left:664.2px;top:94.2px;width:20.8px;height:20.8px;background:#6c6c6c;border:1px solid #454545;border-radius:2px;"></div>
<div style="left:667.2px;top:97.4px;width:14.8px;height:14.4px;background:linear-gradient(160deg,#f0a090,#e05a48 40%,#cc2c2c 75%,#e8683c);border-radius:1.2px;transform:skewY(9deg);"></div>
<span class="t" style="left:654.6px;top:98.2px;width:40px;text-align:center;font-size:11.6px;line-height:13px;font-weight:bold;color:#1c1c8c;transform:scaleX(0.64);text-shadow:0 0 0.7px #fff,0 0 0.7px #fff,0 0 1px #fff;">NOT</span>
<div style="left:658.6px;top:127.2px;width:45.2px;height:43.8px;background:#fff;border:1px solid #d2d2d2;border-radius:3px;"></div>
<div style="left:659.2px;top:127.8px;width:44px;height:11px;background:linear-gradient(#d8d8d8,#ececec);border-radius:2.4px 2.4px 0 0;"></div>
<svg style="left:662.0px;top:129.6px" width="8" height="7" viewBox="0 0 8 7"><path d="M1 4.6h3.6l2-2.6M4.6 4.6l2 1" stroke="#aaa" stroke-width="0.8" fill="none"/><circle cx="1.6" cy="2.6" r="1.1" fill="#bbb"/></svg>
<span class="t" style="top:129.38px;font-size:6.2px;line-height:7.44px;color:#f6f6f6;left:671.6px;">Math</span>
<div style="left:665px;top:143.8px;width:19.6px;height:20px;background:#e8e8e8;border:1px solid #dcdcdc;border-radius:2px;"></div>
<div style="left:668px;top:147px;width:13.6px;height:13.6px;background:linear-gradient(160deg,#f3ecec,#ead8de 55%,#efe2e2);border-radius:1.2px;transform:skewY(9deg);"></div>
<span class="t" style="left:654.8px;top:147.4px;width:40px;text-align:center;font-size:11.6px;line-height:13px;font-weight:bold;color:#c4c6e6;transform:scaleX(0.64);text-shadow:0 0 0.7px #fff;">NOT</span>
<div style="left:652.8px;top:183px;width:44.4px;height:45.2px;background:#fff;border:1px solid #d2d2d2;border-radius:3px;"></div>
<div style="left:653.4px;top:183.6px;width:43.2px;height:11px;background:linear-gradient(#d8d8d8,#ececec);border-radius:2.4px 2.4px 0 0;"></div>
<svg style="left:656.1999999999999px;top:185.4px" width="8" height="7" viewBox="0 0 8 7"><path d="M1 4.6h3.6l2-2.6M4.6 4.6l2 1" stroke="#aaa" stroke-width="0.8" fill="none"/><circle cx="1.6" cy="2.6" r="1.1" fill="#bbb"/></svg>
<span class="t" style="top:185.18px;font-size:6.2px;line-height:7.44px;color:#f6f6f6;left:665.8px;">Math</span>
<div style="left:658.8px;top:199.6px;width:19.6px;height:20.6px;background:#e8e8e8;border:1px solid #dcdcdc;border-radius:2px;"></div>
<div style="left:661.8px;top:202.8px;width:13.6px;height:14.2px;background:linear-gradient(160deg,#f3ecec,#ead8de 55%,#efe2e2);border-radius:1.2px;transform:skewY(9deg);"></div>
<span class="t" style="left:648.6px;top:203.5px;width:40px;text-align:center;font-size:11.6px;line-height:13px;font-weight:bold;color:#c4c6e6;transform:scaleX(0.64);text-shadow:0 0 0.7px #fff;">NOT</span>
<div style="left:610px;top:101.2px;width:67.4px;height:26.4px;background:rgba(252,252,252,0.88);border:1px solid rgba(170,170,170,0.8);box-shadow:1px 1px 2px rgba(0,0,0,0.22);"></div>
<span class="t" style="top:102.51px;font-size:6.16px;line-height:7.39px;color:#4a4a4a;left:614px;">Boolean Inverter (Not)</span>
<div style="left:613.4px;top:110.6px;width:46.8px;height:15px;background:#b7cfe9;border-radius:2.2px;border:0.6px solid #9aa6b4;"></div>
<div style="left:613.7px;top:110.9px;width:46.2px;height:7.2px;background:linear-gradient(#fbd2bf,#f09a78);border-radius:1.8px 1.8px 0 0;"></div>
<span class="t" style="top:112.74px;font-size:3.1px;line-height:3.72px;color:#8a2a18;font-weight:bold;left:620.6px;">ArduinoBooleanInverter</span>
<div style="left:615.4px;top:113px;width:3.4px;height:3px;background:#d84848;"></div>
<div style="left:612.6px;top:120px;width:2px;height:2px;background:#fff;border:0.5px solid #556;border-radius:1px;"></div>
<div style="left:659.4px;top:120px;width:2px;height:2px;background:#fff;border:0.5px solid #556;border-radius:1px;"></div>
<div style="left:615.4px;top:119.4px;width:3px;height:3.2px;background:#ee7a5c;border-radius:0.6px;"></div>
<div style="left:655.2px;top:119.4px;width:3px;height:3.2px;background:#ee7a5c;border-radius:0.6px;"></div>
<span class="t" style="top:119.28px;font-size:3.2px;line-height:3.84px;color:#234;left:619.2px;">In</span>
<span class="t" style="top:119.28px;font-size:3.2px;line-height:3.84px;color:#234;left:649.8px;">Out</span>
<div style="left:599.4px;top:524.6px;width:144.8px;height:12px;background:#fbefe7;"></div>
<span class="t" style="top:528.14px;font-size:6.43px;line-height:7.72px;color:#111;font-weight:bold;left:651px;">Arduino eBay Ads:</span>
<svg style="left:722px;top:526px" width="24" height="11" viewBox="722 526 24 11">
<path d="M724.4 528.2l7.6 7.6" stroke="#2a62b8" stroke-width="1.5"/><path d="M732.2 528l-7.8 7.8" stroke="#d84838" stroke-width="1.3"/>
<rect x="737" y="528" width="7.8" height="8" rx="1" fill="#d83a3a"/><circle cx="740.9" cy="532" r="2.2" fill="none" stroke="#fbe0e0" stroke-width="0.9"/><path d="M740.9 530.6v2l-0.9-0.8M740.9 532.6l0.9-0.8" stroke="#fbe0e0" stroke-width="0.7" fill="none"/>
</svg>
<div style="left:124.6px;top:340.2px;width:474.8px;height:10.2px;background:#f0f0f0;"></div>
<div style="left:124.6px;top:350.4px;width:474.8px;height:186.2px;background:#f3f3f3;"></div>
<div style="left:127.4px;top:350.4px;width:472px;height:31.8px;background:#fbefe7;"></div>
<div style="left:127.4px;top:382px;width:472px;height:154.6px;background:#fff;"></div>
<span class="t" style="top:355.90px;font-size:6.5px;line-height:7.8px;color:#111;left:127.6px;letter-spacing:0.015px;">Port:</span>
<div style="left:142.6px;top:354.4px;width:36px;height:10.8px;background:#e3e3e3;border:1px solid #adadad;"></div>
<span class="t" style="top:356.11px;font-size:6.32px;line-height:7.58px;color:#111;left:145px;letter-spacing:-0.334px;">COM5 (L</span>
<svg style="left:169.6px;top:357px" width="8" height="6" viewBox="0 0 8 6"><path d="M1.2 1.4l2.6 2.6 2.6-2.6" stroke="#444" stroke-width="0.8" fill="none"/></svg>
<span class="t" style="top:355.90px;font-size:6.5px;line-height:7.8px;color:#111;left:181.8px;letter-spacing:-0.184px;">Speed:</span>
<div style="left:201.8px;top:354.4px;width:32.6px;height:10.8px;background:#fff;border:1px solid #adadad;"></div>
<span class="t" style="top:356.01px;font-size:6.48px;line-height:7.78px;color:#111;left:204px;letter-spacing:-0.329px;">9600</span>
<svg style="left:225px;top:357px" width="8" height="6" viewBox="0 0 8 6"><path d="M1.2 1.4l2.6 2.6 2.6-2.6" stroke="#444" stroke-width="0.8" fill="none"/></svg>
<span class="t" style="top:355.90px;font-size:6.5px;line-height:7.8px;color:#111;left:237.4px;letter-spacing:-0.085px;"><u>F</u>ormat:</span>
<div style="left:260px;top:354.4px;width:80.8px;height:10.8px;background:#e3e3e3;border:1px solid #adadad;"></div>
<span class="t" style="top:356.00px;font-size:6.5px;line-height:7.8px;color:#111;left:262.4px;letter-spacing:0.070px;">Unformatted Text</span>
<svg style="left:331.4px;top:357px" width="8" height="6" viewBox="0 0 8 6"><path d="M1.2 1.4l2.6 2.6 2.6-2.6" stroke="#444" stroke-width="0.8" fill="none"/></svg>
<div style="left:345px;top:356px;width:7.4px;height:7.4px;background:#fff;border:0.9px solid #333;"></div>
<svg style="left:345px;top:356px" width="7.4" height="7.4" viewBox="0 0 8 8"><path d="M1.6 4l1.8 1.9 3.2-3.8" stroke="#222" stroke-width="0.9" fill="none"/></svg>
<span class="t" style="top:355.90px;font-size:6.5px;line-height:7.8px;color:#111;left:353.8px;letter-spacing:-0.216px;">Reset</span>
<div style="left:372.6px;top:356px;width:7.4px;height:7.4px;background:#fff;border:0.9px solid #333;"></div>
<svg style="left:372.6px;top:356px" width="7.4" height="7.4" viewBox="0 0 8 8"><path d="M1.6 4l1.8 1.9 3.2-3.8" stroke="#222" stroke-width="0.9" fill="none"/></svg>
<span class="t" style="top:355.90px;font-size:6.5px;line-height:7.8px;color:#111;left:381.2px;letter-spacing:-0.215px;">Log</span>
<div style="left:393.4px;top:353.8px;width:12.4px;height:12.4px;background:#c3d6ee;border:1px solid #a6c2e6;"></div>
<svg style="left:395px;top:355px" width="10" height="10" viewBox="0 0 10 10"><rect x="1.4" y="1.4" width="6.8" height="7" fill="#eaf2fb" stroke="#5a8ed0" stroke-width="0.7"/><path d="M2.6 3.6h4.4M2.6 5.2h4.4M2.6 6.8h4.4" stroke="#4a88d8" stroke-width="0.8"/></svg>
<div style="left:410.8px;top:354px;width:49px;height:12px;background:#d2d2d2;border:1px solid #c2c2c2;"></div>
<svg style="left:417px;top:355px" width="10" height="10" viewBox="0 0 10 10"><rect x="1" y="3" width="6.4" height="5.4" fill="#f4f4f4" stroke="#555" stroke-width="0.7"/><path d="M3.2 7l4.6-5 1 1-4.6 5z" fill="#333"/></svg>
<span class="t" style="top:356.30px;font-size:6.5px;line-height:7.8px;color:#111;left:428.6px;letter-spacing:-0.187px;">Connect</span>
<svg style="left:574px;top:354px" width="24" height="12" viewBox="574 354 24 12">
<path d="M575.6 356.2l7.4 7.6" stroke="#2a62b8" stroke-width="1.5"/><path d="M583.2 356l-7.6 7.8" stroke="#d84838" stroke-width="1.3"/>
<rect x="587.6" y="355.8" width="8.6" height="8.8" rx="1" fill="#d83a3a"/><circle cx="591.9" cy="360.2" r="2.4" fill="none" stroke="#fbe0e0" stroke-width="0.9"/><path d="M591.9 358.2v2.4" stroke="#fbe0e0" stroke-width="0.9"/>
</svg>
<div style="left:127.4px;top:369.6px;width:40.6px;height:12.6px;background:#fff;"></div>
<svg style="left:130px;top:371px" width="10" height="9" viewBox="0 0 10 9"><rect x="1" y="1.2" width="7.4" height="6" fill="#2c4434" stroke="#1c2c20" stroke-width="0.5"/><path d="M2.2 5.6l2-2.2 1.4 1 1.8-1.6" stroke="#8ad080" stroke-width="0.7" fill="none"/></svg>
<span class="t" style="top:371.70px;font-size:6.5px;line-height:7.8px;color:#111;left:142px;letter-spacing:-0.158px;">Terminal</span>
<div style="left:168px;top:370.4px;width:33px;height:11.6px;background:#f3ede9;"></div>
<svg style="left:171px;top:371px" width="11" height="9" viewBox="0 0 11 9"><rect x="1" y="1" width="8" height="6.6" rx="0.8" fill="#3c78d0" stroke="#2a58a8" stroke-width="0.5"/><path d="M2.2 5l1.6-1.8 1.6 1.4 2.2-1.8" stroke="#d8ecff" stroke-width="0.8" fill="none"/></svg>
<span class="t" style="top:371.90px;font-size:6.5px;line-height:7.8px;color:#111;left:183px;letter-spacing:-0.286px;">Scope</span>
<div style="left:131px;top:389.2px;width:7.6px;height:7.6px;background:#fff;border:0.9px solid #333;"></div>
<svg style="left:131px;top:389.2px" width="7.6" height="7.6" viewBox="0 0 8 8"><path d="M1.6 4l1.8 1.9 3.2-3.8" stroke="#222" stroke-width="0.9" fill="none"/></svg>
<span class="t" style="top:389.30px;font-size:6.5px;line-height:7.8px;color:#111;left:140.6px;letter-spacing:-0.157px;">Auto Scroll</span>
<div style="left:176px;top:389.2px;width:7.6px;height:7.6px;background:#fff;border:0.9px solid #333;"></div>
<span class="t" style="top:389.30px;font-size:6.5px;line-height:7.8px;color:#111;left:184.6px;letter-spacing:-0.117px;">Hold</span>
<div style="left:544px;top:385px;width:48.8px;height:12.6px;background:#e1e1e1;border:1px solid #c4c4c4;"></div>
<svg style="left:554px;top:386px" width="10" height="11" viewBox="0 0 10 11"><path d="M2.4 1.4l2.6 4" stroke="#b89038" stroke-width="1"/><path d="M2.6 6.8l4-2 1.8 3.6-4.6 1.2z" fill="#f2d040" stroke="#c8a020" stroke-width="0.4"/></svg>
<span class="t" style="top:387.59px;font-size:6.35px;line-height:7.62px;color:#111;left:567.4px;letter-spacing:-0.275px;">Clear</span>
<div style="left:127.6px;top:400.8px;width:468.6px;height:115.4px;background:#fff;border:1px solid #b2b2b2;border-top-color:#9a9a9a;"></div>
<div style="left:586.4px;top:401.8px;width:8.8px;height:113.4px;background:#f4f4f4;"></div>
<svg style="left:587px;top:403px" width="8" height="6" viewBox="0 0 8 6"><path d="M1.6 4l2.2-2.2 2.2 2.2" stroke="#c0c0c0" stroke-width="0.8" fill="none"/></svg>
<svg style="left:587px;top:508px" width="8" height="6" viewBox="0 0 8 6"><path d="M1.6 1.8l2.2 2.2 2.2-2.2" stroke="#c0c0c0" stroke-width="0.8" fill="none"/></svg>
<div style="left:132px;top:521px;width:371.4px;height:11.6px;background:#fff;border:1px solid #d9d9d9;"></div>
<div style="left:507px;top:524.2px;width:7.2px;height:7.2px;background:#fff;border:0.9px solid #333;"></div>
<svg style="left:507px;top:524.2px" width="7.2" height="7.2" viewBox="0 0 8 8"><path d="M1.6 4l1.8 1.9 3.2-3.8" stroke="#222" stroke-width="0.9" fill="none"/></svg>
<span class="t" style="top:524.30px;font-size:6.5px;line-height:7.8px;color:#111;left:516px;letter-spacing:-0.141px;">Auto Clear</span>
<div style="left:552px;top:521px;width:40.8px;height:12.2px;background:#d4d4d4;border:1px solid #c4c4c4;"></div>
<svg style="left:557px;top:524px" width="9" height="7" viewBox="0 0 9 7"><rect x="1" y="1.4" width="6" height="4.4" fill="#f0f0f0" stroke="#666" stroke-width="0.6"/><path d="M2 4.6h3" stroke="#555" stroke-width="0.6"/></svg>
<span class="t" style="top:523.62px;font-size:6.31px;line-height:7.57px;color:#111;left:568.4px;letter-spacing:-0.334px;">Send</span>
</body></html>
